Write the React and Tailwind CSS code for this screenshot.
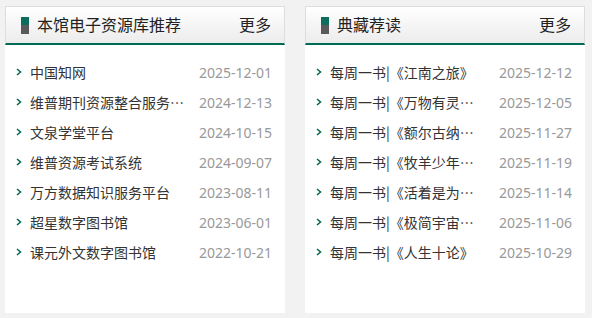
import React from "react";

const resources = [
  { title: "中国知网", date: "2025-12-01" },
  { title: "维普期刊资源整合服务…", date: "2024-12-13" },
  { title: "文泉学堂平台", date: "2024-10-15" },
  { title: "维普资源考试系统", date: "2024-09-07" },
  { title: "万方数据知识服务平台", date: "2023-08-11" },
  { title: "超星数字图书馆", date: "2023-06-01" },
  { title: "课元外文数字图书馆", date: "2022-10-21" },
];

const books = [
  { title: "每周一书|《江南之旅》", date: "2025-12-12" },
  { title: "每周一书|《万物有灵…", date: "2025-12-05" },
  { title: "每周一书|《额尔古纳…", date: "2025-11-27" },
  { title: "每周一书|《牧羊少年…", date: "2025-11-19" },
  { title: "每周一书|《活着是为…", date: "2025-11-14" },
  { title: "每周一书|《极简宇宙…", date: "2025-11-06" },
  { title: "每周一书|《人生十论》", date: "2025-10-29" },
];

const cjk = { fontFamily: '"Noto Sans CJK SC", sans-serif' };
const punct = { fontFamily: '"Noto Sans CJK JP", sans-serif' };

// brackets and ellipsis use the JP cut: spaced 《 and a centred …
function Title({ text }) {
  const parts = text.split(/([《》…])/).filter(Boolean);
  return parts.map((p, i) =>
    /^[《》…]$/.test(p) ? (
      <span key={i} style={punct}>
        {p}
      </span>
    ) : (
      <span key={i}>{p}</span>
    )
  );
}

function Chevron() {
  return (
    <svg width="6" height="8" viewBox="0 0 6 8" className="shrink-0">
      <polyline points="1,1 4.5,4 1,7" fill="none" stroke="#0a6a55" strokeWidth="1.6" />
    </svg>
  );
}

function Panel({ title, items }) {
  return (
    <div className="w-[280px] h-[307px] bg-white flex flex-col">
      {/* header with green underline */}
      <div className="h-[39px] flex items-center justify-between border-t border-x border-[#dddddd] border-b-2 border-b-[#006b54] bg-gradient-to-b from-white to-[#ececec] pl-[15px] pr-[13px]">
        <div className="flex items-center gap-[8px]">
          <div className="w-[8px] h-[17px] flex flex-col">
            <div className="h-[8px] bg-[#0a6e5a]" />
            <div className="flex-1 bg-[#5a5a5a]" />
          </div>
          <span className="text-[16px] text-[#222]">{title}</span>
        </div>
        <span className="text-[16px] text-[#222]">更多</span>
      </div>
      <ul className="pt-[12px] pl-[11px] pr-[13px]">
        {items.map((it) => (
          <li key={it.date + it.title} className="h-[30px] flex items-center justify-between">
            <div className="flex items-center gap-[8px]">
              <Chevron />
              <span className="text-[14px] text-[#333] whitespace-nowrap" style={cjk}>
                <Title text={it.title} />
              </span>
            </div>
            <span className="text-[14px] text-[#999]">{it.date}</span>
          </li>
        ))}
      </ul>
    </div>
  );
}

export default function App() {
  return (
    <div
      className="w-[592px] h-[318px] bg-[#f2f2f2] flex gap-[20px] pl-[5px] pt-[6px]"
      style={{ fontFamily: '"Noto Sans", "Noto Sans CJK SC", sans-serif' }}
    >
      <Panel title="本馆电子资源库推荐" items={resources} />
      <Panel title="典藏荐读" items={books} />
    </div>
  );
}
